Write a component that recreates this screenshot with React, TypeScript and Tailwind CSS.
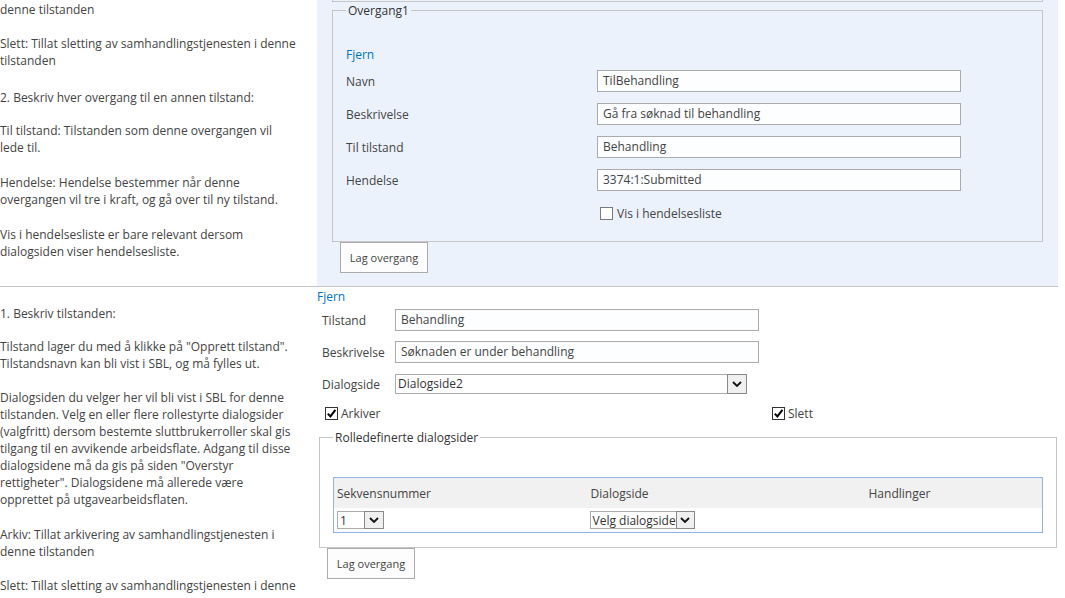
import React from 'react';

function Chevron() {
  return (
    <svg viewBox="0 0 10 6" className="w-[10px] h-[6px]">
      <path d="M1 1 L5 5 L9 1" stroke="#111" strokeWidth="1.8" fill="none" />
    </svg>
  );
}

function Check({ checked }: { checked?: boolean }) {
  return (
    <span
      className={`inline-flex w-[13px] h-[13px] shrink-0 items-center justify-center border bg-white ${
        checked ? 'border-[#333]' : 'border-[#7a7a7a]'
      }`}
    >
      {checked && (
        <svg viewBox="0 0 11 11" className="w-[11px] h-[11px]">
          <path d="M1.8 5.6 L4.4 8.4 L9.4 1.8" stroke="#000" strokeWidth="2" fill="none" />
        </svg>
      )}
    </span>
  );
}

function Select({ value, width, height, arrow }: { value: string; width: string; height: string; arrow: string }) {
  return (
    <div className={`flex bg-white border border-[#ababab] ${width} ${height}`}>
      <span className="flex-1 pl-[2px] leading-[17px] text-[#333] whitespace-nowrap overflow-hidden">{value}</span>
      <span className={`-my-px -mr-px flex items-center justify-center border border-[#8a8a8a] bg-[#f0f0f0] ${arrow}`}>
        <Chevron />
      </span>
    </div>
  );
}

function TextBox({ value, width }: { value: string; width: string }) {
  return (
    <div className={`h-[22px] border border-[#ababab] bg-[#fdfeff] pl-[5px] leading-[20px] text-[#444] whitespace-nowrap ${width}`}>
      {value}
    </div>
  );
}

function Button() {
  return (
    <div className="flex w-[88px] h-[31px] items-center justify-center border border-[#ababab] bg-[#fdfdfd] text-[11px] text-[#444]">
      Lag overgang
    </div>
  );
}

const link = 'text-[#0072c6]';

export default function App() {
  const overgang = [
    ['Navn', 'TilBehandling'],
    ['Beskrivelse', 'Gå fra søknad til behandling'],
    ['Til tilstand', 'Behandling'],
    ['Hendelse', '3374:1:Submitted'],
  ];

  return (
    <div className="w-[1065px] h-[598px] overflow-hidden bg-white text-[12px] leading-[17px] text-[#444] font-['Segoe_UI','Open_Sans',sans-serif]">
      {/* Overgang section */}
      <section className="flex w-[1058px] h-[287px] border-b border-[#c6c6c6]">
        <div className="w-[317px] pt-[1px] whitespace-nowrap">
          <p>denne tilstanden</p>
          <p className="mt-[17px]">
            Slett: Tillat sletting av samhandlingstjenesten i denne<br />tilstanden
          </p>
          <p className="mt-[20px]">2. Beskriv hver overgang til en annen tilstand:</p>
          <p className="mt-[16px]">
            Til tilstand: Tilstanden som denne overgangen vil<br />lede til.
          </p>
          <p className="mt-[18px]">
            Hendelse: Hendelse bestemmer når denne<br />overgangen vil tre i kraft, og gå over til ny tilstand.
          </p>
          <p className="mt-[18px]">
            Vis i hendelsesliste er bare relevant dersom<br />dialogsiden viser hendelsesliste.
          </p>
        </div>

        <div className="flex-1 bg-[#ebf2fc]">
          <div className="ml-[15px] w-[711px] h-[2px] border-x border-b border-[#c6c6c6]" />
          <fieldset className="ml-[15px] w-[711px] border border-[#c6c6c6] px-[13px] pb-[11px]">
            <legend className="px-[2px] text-[#333]">Overgang1</legend>
            <div className={`mt-[27px] mb-[1px] ${link}`}>Fjern</div>
            {overgang.map(([label, value]) => (
              <div key={label} className="flex h-[33px] items-center">
                <span className="w-[251px] pt-[1px]">{label}</span>
                <TextBox value={value} width="w-[364px]" />
              </div>
            ))}
            <div className="flex h-[34px] items-center gap-[4px] pl-[254px]">
              <Check />
              <span>Vis i hendelsesliste</span>
            </div>
          </fieldset>
          <div className="ml-[23px]">
            <Button />
          </div>
        </div>
      </section>

      {/* Tilstand section */}
      <section className="flex w-[1058px]">
        <div className="w-[317px] pt-[18px] whitespace-nowrap">
          <p>1. Beskriv tilstanden:</p>
          <p className="mt-[16px]">
            Tilstand lager du med å klikke på "Opprett tilstand".<br />Tilstandsnavn kan bli vist i SBL, og må fylles ut.
          </p>
          <p className="mt-[17px]">
            Dialogsiden du velger her vil bli vist i SBL for denne<br />
            tilstanden. Velg en eller flere rollestyrte dialogsider<br />
            (valgfritt) dersom bestemte sluttbrukerroller skal gis<br />
            tilgang til en avvikende arbeidsflate. Adgang til disse<br />
            dialogsidene må da gis på siden "Overstyr<br />
            rettigheter". Dialogsidene må allerede være<br />
            opprettet på utgavearbeidsflaten.
          </p>
          <p className="mt-[18px]">
            Arkiv: Tillat arkivering av samhandlingstjenesten i<br />denne tilstanden
          </p>
          <p className="mt-[17px]">Slett: Tillat sletting av samhandlingstjenesten i denne</p>
        </div>

        <div className="flex-1">
          <div className={`mt-[2px] leading-[15px] ${link}`}>Fjern</div>
          <div className="pl-[5px]">
            <div className="flex h-[32px] items-center">
              <span className="w-[73px] pt-[1px]">Tilstand</span>
              <TextBox value="Behandling" width="w-[364px]" />
            </div>
            <div className="flex h-[32px] items-center">
              <span className="w-[73px] pt-[1px]">Beskrivelse</span>
              <TextBox value="Søknaden er under behandling" width="w-[364px]" />
            </div>
            <div className="flex h-[32px] items-center">
              <span className="w-[73px] pt-[1px]">Dialogside</span>
              <Select value="Dialogside2" width="w-[352px]" height="h-[20px]" arrow="w-[20px]" />
            </div>
          </div>
          <div className="flex h-[26px] items-center pl-[8px]">
            <div className="flex w-[447px] items-center gap-[3px]">
              <Check checked />
              <span>Arkiver</span>
            </div>
            <div className="flex items-center gap-[3px]">
              <Check checked />
              <span>Slett</span>
            </div>
          </div>

          <fieldset className="mt-[3px] ml-[2px] w-[738px] border border-[#c6c6c6] px-[13px] pb-[14px]">
            <legend className="px-[2px] text-[#333]">Rolledefinerte dialogsider</legend>
            <table className="mt-[31px] w-[710px] border-collapse border border-[#92b4de]">
              <thead>
                <tr className="h-[30px] bg-[#f1f1f1]">
                  <th className="w-[254px] pl-[3px] pt-[2px] text-left font-normal">Sekvensnummer</th>
                  <th className="w-[278px] pl-[3px] pt-[2px] text-left font-normal">Dialogside</th>
                  <th className="pl-[3px] pt-[2px] text-left font-normal">Handlinger</th>
                </tr>
              </thead>
              <tbody>
                <tr className="h-[25px]">
                  <td className="pl-[3px]">
                    <Select value="1" width="w-[47px]" height="h-[18px]" arrow="w-[20px]" />
                  </td>
                  <td className="pl-[2px]">
                    <Select value="Velg dialogside" width="w-[105px]" height="h-[18px]" arrow="w-[19px]" />
                  </td>
                  <td />
                </tr>
              </tbody>
            </table>
          </fieldset>
          <div className="ml-[10px]">
            <Button />
          </div>
        </div>
      </section>
    </div>
  );
}
